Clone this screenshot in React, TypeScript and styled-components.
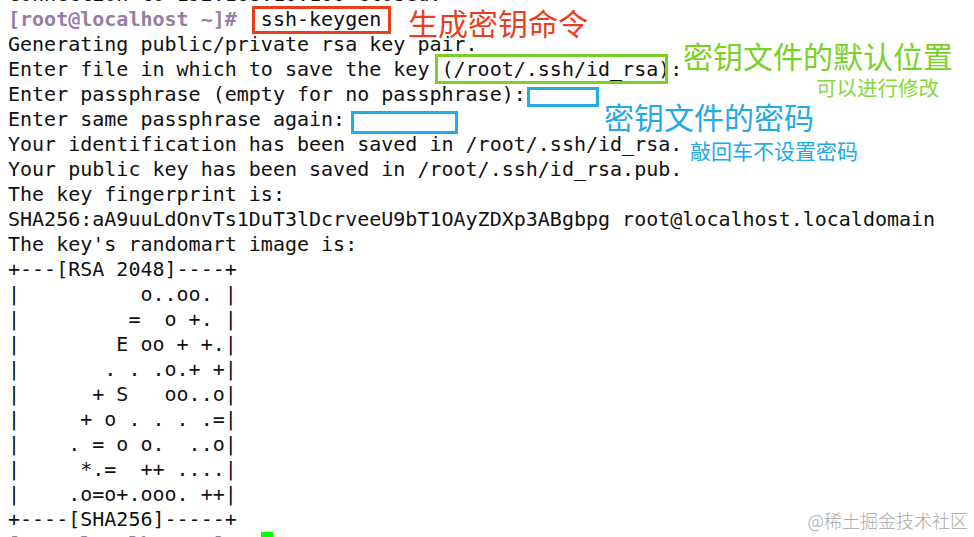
import React from "react";
import styled, { createGlobalStyle } from "styled-components";

const GlobalStyle = createGlobalStyle`
  html, body {
    margin: 0;
    padding: 0;
    background: #ffffff;
    overflow: hidden;
  }
`;

const Screen = styled.div`
  position: relative;
  width: 974px;
  height: 537px;
  overflow: hidden;
  background: #ffffff;
`;

const Terminal = styled.div`
  display: flex;
  flex-direction: column;
  margin-top: -18px;
  padding-left: 8px;
  font-family: "DejaVu Sans Mono", "Liberation Mono", monospace;
  font-size: 20px;
  line-height: 25px;
  color: #111111;
  white-space: pre;
`;

const Line = styled.div`
  height: 25px;
`;

const Prompt = styled.span`
  color: #957da3;
  font-weight: bold;
`;

const Cursor = styled.span`
  display: inline-block;
  width: 12px;
  height: 25px;
  vertical-align: top;
  background: #00ff00;
`;

const Frame = styled.div<{ $x: number; $y: number; $w: number; $h: number; $color: string }>`
  position: absolute;
  left: ${(p) => p.$x}px;
  top: ${(p) => p.$y}px;
  width: ${(p) => p.$w}px;
  height: ${(p) => p.$h}px;
  box-sizing: border-box;
  border: 3px solid ${(p) => p.$color};
`;

const Callout = styled.div<{ $x: number; $y: number; $size: number; $color: string }>`
  position: absolute;
  left: ${(p) => p.$x}px;
  top: ${(p) => p.$y}px;
  font-family: "Noto Sans CJK SC", "Noto Sans", sans-serif;
  font-size: ${(p) => p.$size}px;
  line-height: 1;
  color: ${(p) => p.$color};
  white-space: nowrap;
`;

const Watermark = styled.div`
  position: absolute;
  right: 6px;
  bottom: 8px;
  font-family: "Noto Sans CJK SC", "Noto Sans", sans-serif;
  font-weight: 300;
  font-size: 18px;
  line-height: 1;
  color: #a8a8a8;
  white-space: nowrap;
`;

const RED = "#e8401f";
const GREEN = "#79d127";
const LIGHT_GREEN = "#86d83a";
const BLUE = "#22a9e6";

const output = [
  "Generating public/private rsa key pair.",
  "Enter file in which to save the key (/root/.ssh/id_rsa):",
  "Enter passphrase (empty for no passphrase):",
  "Enter same passphrase again:",
  "Your identification has been saved in /root/.ssh/id_rsa.",
  "Your public key has been saved in /root/.ssh/id_rsa.pub.",
  "The key fingerprint is:",
  "SHA256:aA9uuLdOnvTs1DuT3lDcrveeU9bT1OAyZDXp3ABgbpg root@localhost.localdomain",
  "The key's randomart image is:",
  "+---[RSA 2048]----+",
  "|          o..oo. |",
  "|         =  o +. |",
  "|        E oo + +.|",
  "|       . . .o.+ +|",
  "|      + S   oo..o|",
  "|     + o . . . .=|",
  "|    . = o o.  ..o|",
  "|     *.=  ++ ....|",
  "|    .o=o+.ooo. ++|",
  "+----[SHA256]-----+",
];

export default function App() {
  return (
    <Screen>
      <GlobalStyle />
      <Terminal>
        <Line>Connection to 192.168.10.100 closed.</Line>
        <Line>
          <Prompt>[root@localhost ~]#</Prompt>
          {"  ssh-keygen"}
        </Line>
        {output.map((l, i) => (
          <Line key={i}>{l}</Line>
        ))}
        <Line>
          <Prompt>[root@localhost ~]#</Prompt>
          {"  "}
          <Cursor />
        </Line>
      </Terminal>

      <Frame $x={252} $y={6} $w={139} $h={28} $color={RED} />
      <Callout $x={408} $y={7} $size={30} $color={RED}>生成密钥命令</Callout>

      <Frame $x={435} $y={54} $w={233} $h={30} $color={GREEN} />
      <Callout $x={683} $y={40} $size={30} $color={GREEN}>密钥文件的默认位置</Callout>
      <Callout $x={816} $y={77} $size={20.5} $color={LIGHT_GREEN}>可以进行修改</Callout>

      <Frame $x={527} $y={87} $w={72} $h={20} $color={BLUE} />
      <Frame $x={351} $y={111} $w={107} $h={23} $color={BLUE} />
      <Callout $x={604} $y={101} $size={30} $color={BLUE}>密钥文件的密码</Callout>
      <Callout $x={690} $y={140} $size={21} $color={BLUE}>敲回车不设置密码</Callout>

      <Watermark>@稀土掘金技术社区</Watermark>
    </Screen>
  );
}
